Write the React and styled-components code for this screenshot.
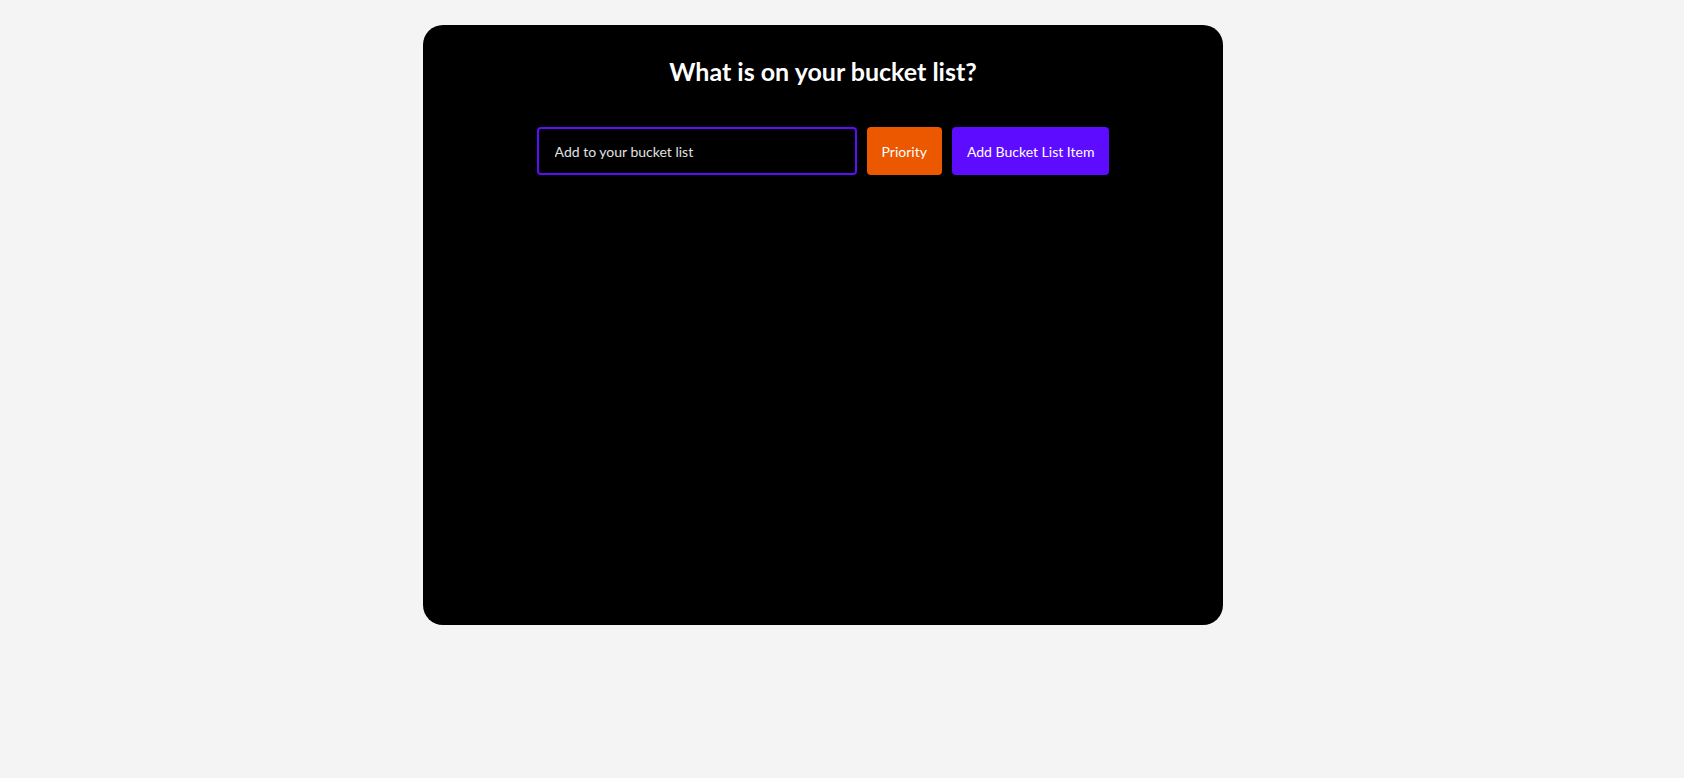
import React, { useState } from 'react';
import styled, { createGlobalStyle } from 'styled-components';

const GlobalStyle = createGlobalStyle`
  body {
    margin: 0;
    background-color: #f4f4f4;
    font-family: 'Lato', 'Open Sans', sans-serif;
  }
`;

const Page = styled.div`
  display: flex;
  justify-content: center;
  padding: 25px 38px 0 0;
`;

const Card = styled.div`
  background-color: #000;
  border-radius: 20px;
  box-sizing: border-box;
  display: flex;
  flex-direction: column;
  align-items: center;
  min-height: 600px;
  padding-top: 31px;
  width: 800px;
`;

const Title = styled.h1`
  color: #fff;
  font-size: 25px;
  font-weight: 700;
  line-height: 30px;
  margin: 0 0 41px;
`;

const Form = styled.form`
  display: flex;
  gap: 10px;
`;

const Input = styled.input`
  background: transparent;
  border: 2px solid #5d0cff;
  border-radius: 4px;
  box-sizing: border-box;
  color: #fff;
  font-family: inherit;
  font-size: 14px;
  height: 48px;
  outline: none;
  padding: 0 16px;
  width: 320px;
  &::placeholder {
    color: #e2e2e2;
  }
`;

const Button = styled.button`
  background-color: ${props => (props.accent ? '#eb5800' : '#5d0cff')};
  border: none;
  border-radius: 4px;
  color: #fff;
  cursor: pointer;
  font-family: inherit;
  font-size: 14px;
  height: 48px;
  padding: 0 15px;
`;

const App = () => {
  const [input, setInput] = useState('');

  return (
    <Page>
      <GlobalStyle />
      <Card>
        <Title>What is on your bucket list?</Title>
        <Form onSubmit={e => e.preventDefault()}>
          <Input
            type="text"
            placeholder="Add to your bucket list"
            value={input}
            onChange={e => setInput(e.target.value)}
          />
          <Button type="button" accent>Priority</Button>
          <Button type="submit">Add Bucket List Item</Button>
        </Form>
      </Card>
    </Page>
  );
};

export default App;
